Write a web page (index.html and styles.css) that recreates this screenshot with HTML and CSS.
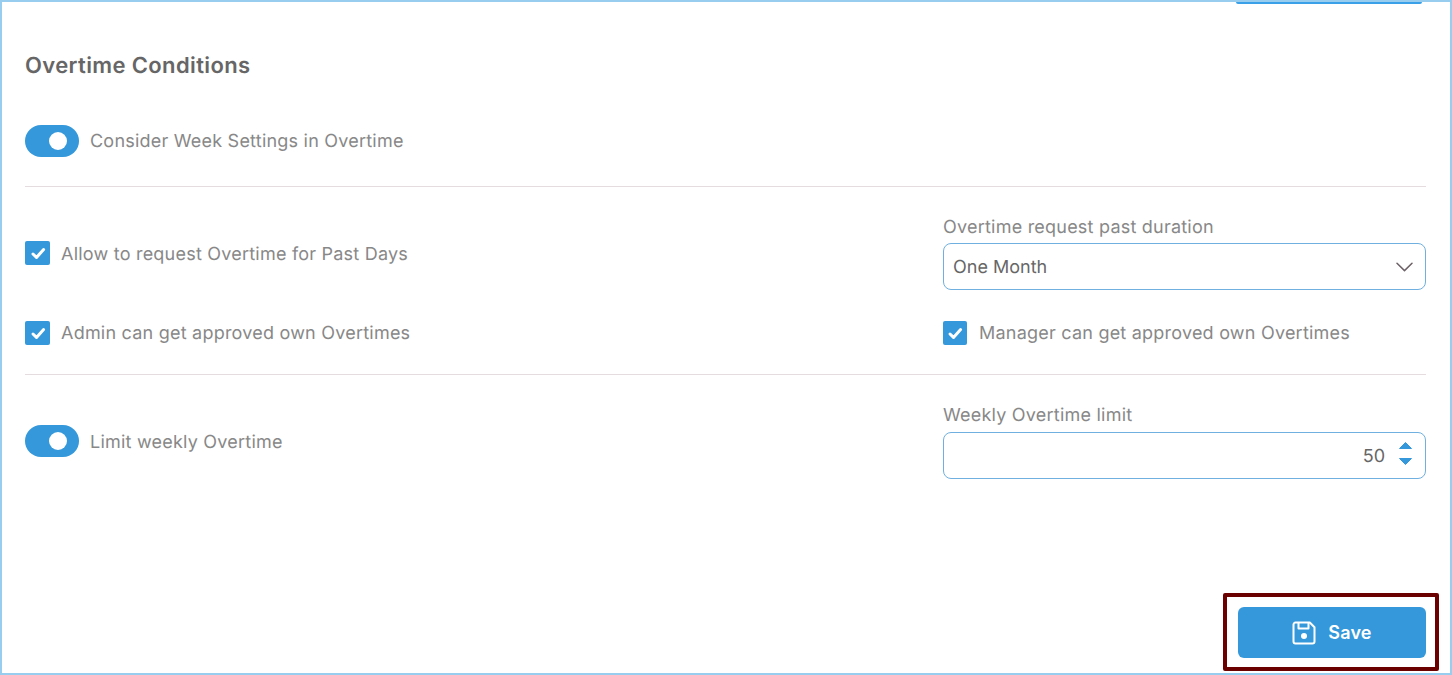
FILE: index.html
```html
<!DOCTYPE html>
<html lang="en">
<head>
<meta charset="utf-8">
<title>Overtime Conditions</title>
<link rel="stylesheet" href="styles.css">
</head>
<body>
<main class="frame">
  <div class="cut-button"></div>
  <h2 class="title">Overtime Conditions</h2>

  <div class="row row-toggle-first">
    <span class="toggle"><span class="knob"></span></span>
    <span class="label">Consider Week Settings in Overtime</span>
  </div>

  <hr class="divider divider-first">

  <div class="grid grid-past">
    <div class="check-row">
      <span class="checkbox"><svg viewBox="0 0 24 24" width="24" height="24"><path d="M7 13l3.500 3.400L17.600 8.600" fill="none" stroke="#fff" stroke-width="3" stroke-linecap="round" stroke-linejoin="round"/></svg></span>
      <span class="label">Allow to request Overtime for Past Days</span>
    </div>
    <div class="field field-tight">
      <label class="field-label">Overtime request past duration</label>
      <div class="control">
        <span class="value">One Month</span>
        <svg class="chevron" viewBox="0 0 18 10" width="18" height="10"><path d="M1 1.200L8.500 8.600 16 1.200" fill="none" stroke="#6b6166" stroke-width="1.500" stroke-linecap="round" stroke-linejoin="round"/></svg>
      </div>
    </div>
  </div>

  <div class="grid grid-own">
    <div class="check-row">
      <span class="checkbox"><svg viewBox="0 0 24 24" width="24" height="24"><path d="M7 13l3.500 3.400L17.600 8.600" fill="none" stroke="#fff" stroke-width="3" stroke-linecap="round" stroke-linejoin="round"/></svg></span>
      <span class="label">Admin can get approved own Overtimes</span>
    </div>
    <div class="check-row check-row-right">
      <span class="checkbox"><svg viewBox="0 0 24 24" width="24" height="24"><path d="M7 13l3.500 3.400L17.600 8.600" fill="none" stroke="#fff" stroke-width="3" stroke-linecap="round" stroke-linejoin="round"/></svg></span>
      <span class="label">Manager can get approved own Overtimes</span>
    </div>
  </div>

  <hr class="divider divider-second">

  <div class="grid grid-limit">
    <div class="row">
      <span class="toggle"><span class="knob"></span></span>
      <span class="label">Limit weekly Overtime</span>
    </div>
    <div class="field">
      <label class="field-label">Weekly Overtime limit</label>
      <div class="control control-number">
        <span class="value">50</span>
        <span class="spinner">
          <svg viewBox="0 0 13 7" width="13" height="7"><path d="M6.500 .5L12.500 6.500H.5z" fill="#3498db" stroke="#3498db" stroke-linejoin="round"/></svg>
          <svg viewBox="0 0 13 7" width="13" height="7"><path d="M6.500 6.500L12.500 .5H.5z" fill="#3498db" stroke="#3498db" stroke-linejoin="round"/></svg>
        </span>
      </div>
    </div>
  </div>

  <div class="actions">
    <button class="save" type="button">
      <svg viewBox="0 0 24 24" width="24" height="24" fill="none" stroke="#fff" stroke-width="2" stroke-linejoin="round"><path d="M1.500 3.500a2 2 0 0 1 2-2h14.300l4.700 4.700v14.300a2 2 0 0 1-2 2h-17a2 2 0 0 1-2-2z"/><path d="M6.500 1.500v6h10v-6"/><circle cx="12" cy="15" r="3" fill="#fff" stroke="none"/></svg>
      <span>Save</span>
    </button>
    <div class="highlight"></div>
  </div>
</main>
</body>
</html>
```
FILE: styles.css
```css
* { box-sizing: border-box; }
html, body { margin: 0; height: 100%; }
body {
  background: #fff;
  font-family: Inter, "Liberation Sans", sans-serif;
  overflow: hidden;
  text-rendering: geometricPrecision;
}

.frame {
  position: relative;
  width: 1452px;
  height: 675px;
  border: 2px solid #99cdf0;
  padding: 0 24px 0 23px;
  display: flex;
  flex-direction: column;
}
.cut-button {
  position: absolute;
  top: 0;
  left: 1234px;
  width: 186px;
  height: 2px;
  background: #3aa0e8;
  border-radius: 0 0 4px 4px;
}
.title {
  margin: 50px 0 0;
  font-size: 22px;
  line-height: 28px;
  font-weight: 600;
  letter-spacing: .37px;
  color: #666;
}
.row, .check-row { display: flex; align-items: center; gap: 11px; }
.row-toggle-first { margin-top: 45px; }
.toggle {
  width: 54px;
  height: 32px;
  border-radius: 16px;
  background: #3498db;
  display: flex;
  align-items: center;
  justify-content: flex-end;
  padding-right: 12px;
  flex: none;
}
.knob { width: 18px; height: 18px; border-radius: 50%; background: #fff; }
.label {
  font-size: 18px;
  line-height: 22px;
  padding-top: 2px;
  letter-spacing: .22px;
  color: #888;
}
.grid-past .label { line-height: 21px; padding-top: 3px; }
.grid-limit .label { line-height: 20px; padding-top: 4px; }
.divider { margin: 0; border: 0; border-top: 1px solid #e4dcdf; }
.divider-first { margin-top: 29px; }
.divider-second { margin-top: 29px; }
.grid {
  display: grid;
  grid-template-columns: 1fr 483px;
  align-items: center;
}
.grid-past { margin-top: 28px; }
.grid-own { margin-top: 31px; }
.grid-limit { margin-top: 28px; }
.checkbox {
  width: 25px;
  height: 24px;
  border-radius: 2px;
  background: #3498db;
  display: flex;
  align-items: center;
  justify-content: center;
  flex: none;
}
.check-row-right { gap: 12px; }
.check-row-right .checkbox { width: 24px; }
.field { display: flex; flex-direction: column; gap: 5px; }
.field-tight { gap: 4px; }
.field-label {
  font-size: 18px;
  line-height: 23px;
  padding-top: 1px;
  letter-spacing: .22px;
  color: #888;
}
.control {
  height: 47px;
  border: 1px solid #6fb0e0;
  border-radius: 8px;
  padding: 1px 11px 0 9px;
  display: flex;
  align-items: center;
  justify-content: space-between;
  font-size: 18px;
  color: #666;
}
.control-number { justify-content: flex-end; gap: 14px; padding: 0 13px 0 9px; }
.control-number .value { padding-top: 2px; }
.spinner { display: flex; flex-direction: column; gap: 9px; margin-bottom: 4px; }
.spinner svg { display: block; }
.actions {
  margin-top: auto;
  margin-bottom: 15px;
  display: flex;
  justify-content: flex-end;
  position: relative;
}
.save {
  width: 188px;
  height: 51px;
  border: 0;
  border-radius: 6px;
  background: #3498db;
  color: #fff;
  font: 600 18px Inter, "Liberation Sans", sans-serif;
  letter-spacing: .2px;
  display: flex;
  align-items: center;
  justify-content: center;
  gap: 12px;
}
.highlight {
  position: absolute;
  top: -14px;
  right: -13px;
  width: 216px;
  height: 78px;
  border: 4px solid #6b0000;
  border-radius: 2px;
  pointer-events: none;
}
```
